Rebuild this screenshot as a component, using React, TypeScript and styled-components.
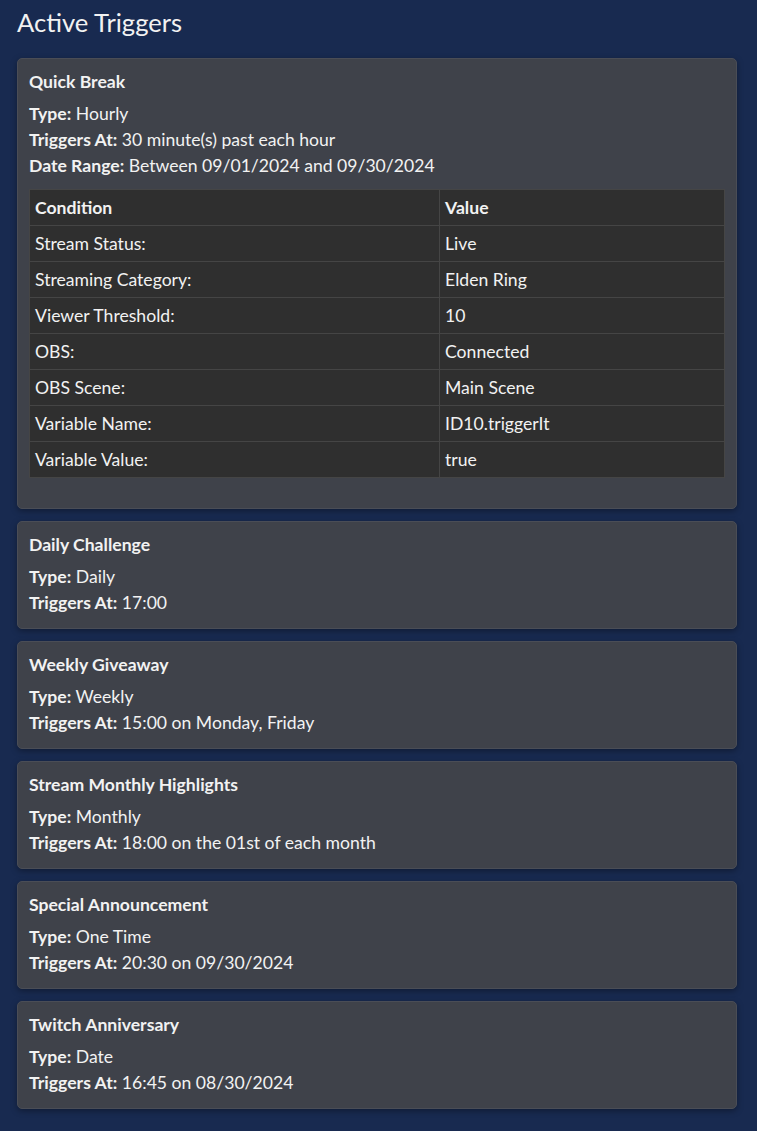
import React from 'react'
import styled, { createGlobalStyle } from 'styled-components'

const GlobalStyle = createGlobalStyle`
  html, body {
    margin: 0;
    padding: 0;
    background: #182a50;
  }
  body {
    font-family: Lato, "Open Sans", sans-serif;
    color: #f2f2f2;
  }
`

const Page = styled.div`
  padding: 5px 20px 24px 17px;
  min-height: 1131px;
  box-sizing: border-box;
`

const Heading = styled.h1`
  font-size: 25.6px;
  font-weight: 400;
  margin: 0 0 18px;
  line-height: 35px;
`

const TriggerList = styled.div`
  display: flex;
  flex-direction: column;
  gap: 12px;
`

const Card = styled.div`
  background: #3f424a;
  border: 1px solid #4a4d56;
  border-radius: 5px;
  box-shadow: 0 2px 6px rgba(0, 0, 0, 0.35);
  padding: 11px 11px 12px;
`

const CardTitle = styled.h3`
  font-size: 17.6px;
  font-weight: 700;
  margin: 0 0 7px;
  line-height: 24px;
`

const Line = styled.div`
  font-size: 17.6px;
  line-height: 26px;
`

const Label = styled.strong`
  font-weight: 700;
`

const Table = styled.table`
  width: 100%;
  border-collapse: collapse;
  background: #2f2f2f;
  margin: 10px 0 18px;
  font-size: 17.6px;
`

const Cell = styled.td<{ $head?: boolean; $first?: boolean }>`
  border: 1px solid #454545;
  padding: 5px 5px;
  line-height: 25px;
  text-align: left;
  width: ${({ $first }) => ($first ? '59%' : 'auto')};
  font-weight: ${({ $head }) => ($head ? 700 : 400)};
`

interface Trigger {
  name: string
  type: string
  at: string
  range?: string
  conditions?: [string, string][]
}

const triggers: Trigger[] = [
  {
    name: 'Quick Break',
    type: 'Hourly',
    at: '30 minute(s) past each hour',
    range: 'Between 09/01/2024 and 09/30/2024',
    conditions: [
      ['Stream Status:', 'Live'],
      ['Streaming Category:', 'Elden Ring'],
      ['Viewer Threshold:', '10'],
      ['OBS:', 'Connected'],
      ['OBS Scene:', 'Main Scene'],
      ['Variable Name:', 'ID10.triggerIt'],
      ['Variable Value:', 'true'],
    ],
  },
  { name: 'Daily Challenge', type: 'Daily', at: '17:00' },
  { name: 'Weekly Giveaway', type: 'Weekly', at: '15:00 on Monday, Friday' },
  { name: 'Stream Monthly Highlights', type: 'Monthly', at: '18:00 on the 01st of each month' },
  { name: 'Special Announcement', type: 'One Time', at: '20:30 on 09/30/2024' },
  { name: 'Twitch Anniversary', type: 'Date', at: '16:45 on 08/30/2024' },
]

const App: React.FC = (): JSX.Element => (
  <>
    <GlobalStyle />
    <Page>
      <Heading>Active Triggers</Heading>
      <TriggerList>
        {triggers.map((t: Trigger, i: number) => (
          <Card key={i}>
            <CardTitle>{t.name}</CardTitle>
            <Line>
              <Label>Type:</Label> {t.type}
            </Line>
            <Line>
              <Label>Triggers At:</Label> {t.at}
            </Line>
            {t.range && (
              <Line>
                <Label>Date Range:</Label> {t.range}
              </Line>
            )}
            {t.conditions && (
              <Table>
                <thead>
                  <tr>
                    <Cell as="th" $head $first>
                      Condition
                    </Cell>
                    <Cell as="th" $head>
                      Value
                    </Cell>
                  </tr>
                </thead>
                <tbody>
                  {t.conditions.map(([c, v], j) => (
                    <tr key={j}>
                      <Cell $first>{c}</Cell>
                      <Cell>{v}</Cell>
                    </tr>
                  ))}
                </tbody>
              </Table>
            )}
          </Card>
        ))}
      </TriggerList>
    </Page>
  </>
)

export default App
